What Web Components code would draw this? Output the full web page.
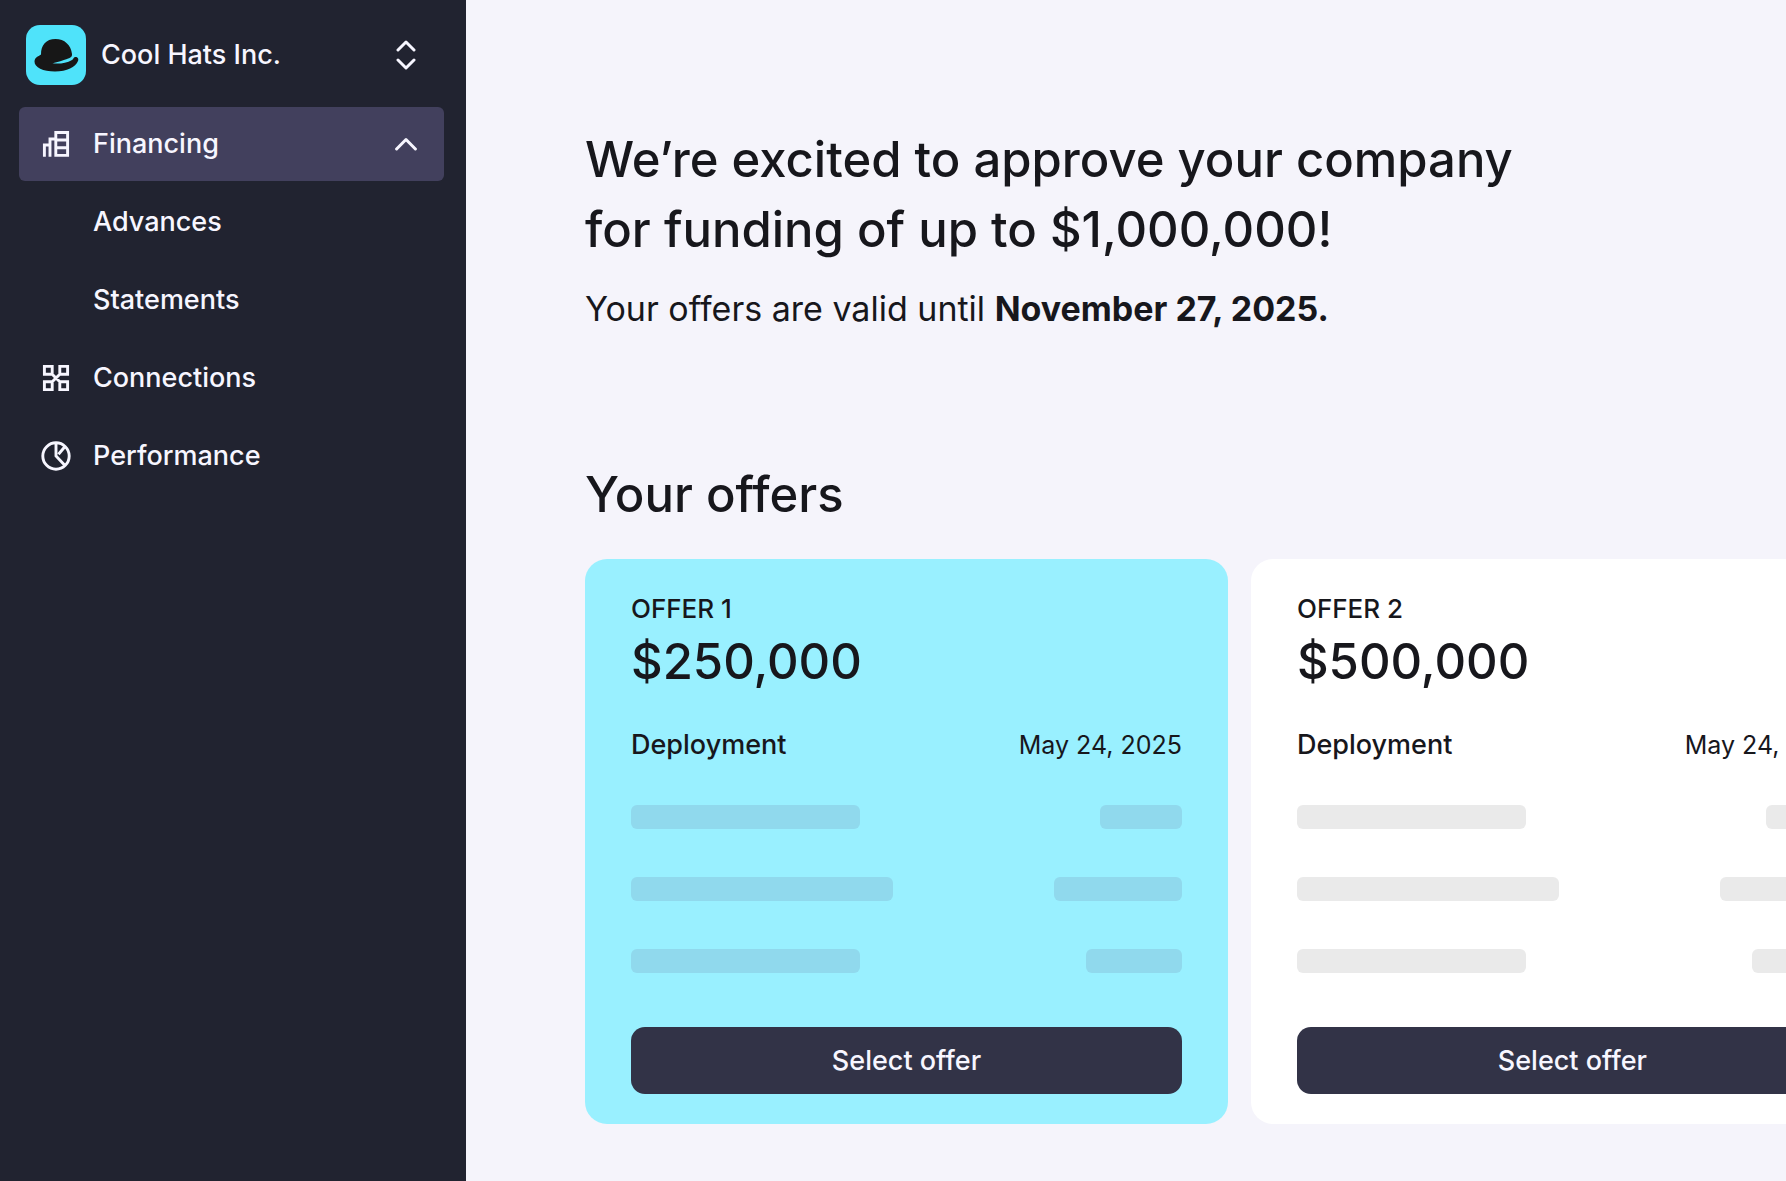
<!DOCTYPE html>
<html lang="en">
<head>
<meta charset="utf-8">
<meta name="viewport" content="width=device-width, initial-scale=1">
<title>Cool Hats Inc. – Financing</title>
<style>
  body { margin:0; background:#f5f4fb; color:#17171c; font-family:Inter,"Liberation Sans",sans-serif; }
</style>
</head>
<body>
<app-shell>
  <side-bar slot="sidebar">
    <account-switcher slot="account">Cool Hats Inc.</account-switcher>
    <nav-item icon="buildings" href="#financing" active expanded>Financing</nav-item>
    <nav-item href="#advances">Advances</nav-item>
    <nav-item href="#statements">Statements</nav-item>
    <nav-item icon="nodes" href="#connections">Connections</nav-item>
    <nav-item icon="pie" href="#performance">Performance</nav-item>
  </side-bar>
  <approval-banner>
    <span slot="title">We’re excited to approve your company<br>for funding of up to $1,000,000!</span>
    Your offers are valid until <b>November 27, 2025.</b>
  </approval-banner>
  <offer-list heading="Your offers">
    <offer-card name="OFFER 1" amount="$250,000" date="May 24, 2025" highlighted></offer-card>
    <offer-card name="OFFER 2" amount="$500,000" date="May 24, 2025"></offer-card>
  </offer-list>
</app-shell>

<script>
(() => {
  const icons = {
    buildings: `<path d="M15.8 4.5H27.6V27.4H15.8ZM15.8 12H27.6M15.8 19.8H27.6M15.8 11H10V28.8M10 17H4.4V28.8"/>`,
    nodes: `<path d="M4.4 4.4H12.2V12.2H4.4ZM19.800 4.4H27.6V12.2H19.800ZM4.4 19.800H12.2V27.6H4.4ZM19.800 19.800H27.6V27.6H19.800ZM12.2 12.2L19.800 19.800M19.800 12.2L12.2 19.800"/>`,
    pie: `<circle cx="16" cy="16" r="13.2"/><path d="M16 3V16L25 25.5M18.5 14.2L25 6.5"/>`
  };

  const define = (name, setup) => customElements.define(name, class extends HTMLElement {
    constructor() {
      super();
      this.attachShadow({ mode: "open" });
    }

    connectedCallback() {
      this.shadowRoot.innerHTML = setup(this);
    }
  });

  define("app-shell", () => `
    <style>
      :host { display:grid; grid-template-columns:466px minmax(0,1fr); min-height:100vh; }
      main { padding:125px 0 57px 119px; overflow:hidden; }
    </style>
    <slot name="sidebar"></slot>
    <main><slot></slot></main>`);

  define("side-bar", () => `
    <style>
      :host { display:block; box-sizing:border-box; padding:25px 22px 24px 19px; background:#212330; color:#f7f6ff; }
      nav { display:flex; flex-direction:column; gap:4px; margin-top:22px; }
    </style>
    <slot name="account"></slot>
    <nav aria-label="Main"><slot></slot></nav>`);

  define("account-switcher", () => `
    <style>
      :host { display:block; }
      button {
        display:flex; align-items:center; gap:15px; width:100%; padding:0 28px 0 7px;
        border:0; background:none; color:inherit; font:500 27px/32px Inter,"Liberation Sans",sans-serif;
        text-align:left; cursor:pointer;
      }
      .name { flex:1; }
      svg { display:block; flex:none; }
    </style>
    <button type="button">
      <svg width="60" height="60" viewBox="0 0 60 60" aria-hidden="true">
        <rect width="60" height="60" rx="14" fill="#4fe3fa"/>
        <path fill="#171717" d="M15 29.500C15 20 20 14 29.500 14C38.500 14 45 20 46 29C46.300 32 44 33 41 34C37 35.500 32 36.800 26.500 38.200C32 39.200 40 38.500 46 35C47.500 34 47.500 32.500 49 32C51.500 31.700 53 33.500 52 36C49.500 42 41 46.500 29 46.500C17 46.500 8.500 42.500 8.500 36.500C8.500 32.500 12 31.500 15 29.500Z"/>
      </svg>
      <span class="name"><slot></slot></span>
      <svg width="20" height="30" viewBox="0 0 20 30" fill="none" stroke="currentColor" stroke-width="3" stroke-linecap="round" stroke-linejoin="round" aria-hidden="true">
        <path d="M2 10L10 2L18 10M2 20L10 28L18 20"/>
      </svg>
    </button>`);

  define("nav-item", (el) => `
    <style>
      :host { display:block; }
      a {
        display:flex; align-items:center; gap:21px; height:74px; padding:0 27px 0 21px;
        border-radius:6px; color:inherit; text-decoration:none; font-weight:500; font-size:27px; line-height:32px;
      }
      :host([active]) a { background:#42405d; }
      .label { flex:1; }
      svg { display:block; flex:none; }
    </style>
    <a href="${el.getAttribute("href")}"${el.hasAttribute("active") ? ' aria-current="page"' : ""}>
      <svg width="32" height="32" viewBox="0 0 32 32" fill="none" stroke="currentColor" stroke-width="2.900" aria-hidden="true">${icons[el.getAttribute("icon")] || ""}</svg>
      <span class="label"><slot></slot></span>
      ${el.hasAttribute("expanded") ? `<svg width="22" height="14" viewBox="0 0 22 14" fill="none" stroke="currentColor" stroke-width="3" stroke-linecap="round" stroke-linejoin="round" aria-hidden="true"><path d="M1.600 12L11 2.500L20.400 12"/></svg>` : ""}
    </a>`);

  define("approval-banner", () => `
    <style>
      :host { display:block; }
      h1 { margin:0 0 20px; font-weight:500; font-size:49px; line-height:70px; }
      p { margin:0; font-size:34px; line-height:48px; }
    </style>
    <h1><slot name="title"></slot></h1>
    <p><slot></slot></p>`);

  define("offer-list", (el) => `
    <style>
      :host { display:block; margin-top:132px; }
      h2 { margin:0 0 34px; font-weight:500; font-size:49px; line-height:60px; }
      .cards { display:grid; grid-auto-flow:column; grid-auto-columns:36vw; justify-content:start; gap:23px; }
    </style>
    <h2>${el.getAttribute("heading")}</h2>
    <div class="cards"><slot></slot></div>`);

  define("offer-card", (el) => `
    <style>
      :host {
        --bar:#eaeaea;
        display:block; box-sizing:border-box; padding:34px 46px 30px; border-radius:22px;
        background:#fff; line-height:32px;
      }
      :host([highlighted]) { --bar:#90d9ed; background:#99f0ff; }
      h3 { margin:0; font-weight:500; font-size:26px; }
      .amount { margin:7px 0 37px; font-weight:500; font-size:49px; line-height:60px; }
      dl, .row { display:flex; justify-content:space-between; align-items:baseline; margin:0; }
      dt { font-weight:500; font-size:27px; }
      dd { margin:0; font-size:25px; }
      .rows { display:grid; gap:48px; margin:44px 0 54px; }
      .bar { height:24px; border-radius:6px; background:var(--bar); }
      button {
        display:block; width:100%; height:67px; border:0; border-radius:14px; background:#323347;
        color:#f7f6ff; font:500 27px/32px Inter,"Liberation Sans",sans-serif; cursor:pointer;
      }
    </style>
    <h3>${el.getAttribute("name")}</h3>
    <p class="amount">${el.getAttribute("amount")}</p>
    <dl><dt>Deployment</dt><dd>${el.getAttribute("date")}</dd></dl>
    <div class="rows" aria-hidden="true">
      ${[[229, 82], [262, 128], [229, 96]].map(([label, value]) => `
        <div class="row">
          <div class="bar" style="width:${label}px"></div>
          <div class="bar" style="width:${value}px"></div>
        </div>`).join("")}
    </div>
    <button type="button">Select offer</button>`);
})();
</script>
</body>
</html>
